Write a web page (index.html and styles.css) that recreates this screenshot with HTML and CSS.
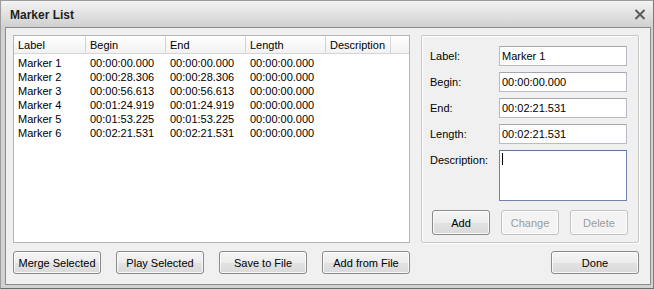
FILE: index.html
```html
<!DOCTYPE html>
<html lang="en">
<head>
    <meta charset="UTF-8">
    <title>Marker List</title>
    <link rel="stylesheet" href="styles.css">
</head>
<body>
    <div class="window">
        <!-- Title bar -->
        <div class="titlebar">
            <span class="title">Marker List</span>
            <svg class="close" width="12" height="11" viewBox="0 0 12 11">
                <path d="M1.5 1 L10.5 10 M10.5 1 L1.5 10" stroke="#5a5a5a" stroke-width="2" fill="none"/>
            </svg>
        </div>

        <div class="client">
            <!-- Left side: marker list and list actions -->
            <div class="left-col">
                <div class="listview">
                    <div class="list-header">
                        <div class="col col-label">Label</div>
                        <div class="col col-time">Begin</div>
                        <div class="col col-time">End</div>
                        <div class="col col-time">Length</div>
                        <div class="col col-desc">Description</div>
                        <div class="col col-fill"></div>
                    </div>
                    <div class="list-body">
                        <div class="row"><div class="cell col-label">Marker 1</div><div class="cell col-time">00:00:00.000</div><div class="cell col-time">00:00:00.000</div><div class="cell col-time">00:00:00.000</div></div>
                        <div class="row"><div class="cell col-label">Marker 2</div><div class="cell col-time">00:00:28.306</div><div class="cell col-time">00:00:28.306</div><div class="cell col-time">00:00:00.000</div></div>
                        <div class="row"><div class="cell col-label">Marker 3</div><div class="cell col-time">00:00:56.613</div><div class="cell col-time">00:00:56.613</div><div class="cell col-time">00:00:00.000</div></div>
                        <div class="row"><div class="cell col-label">Marker 4</div><div class="cell col-time">00:01:24.919</div><div class="cell col-time">00:01:24.919</div><div class="cell col-time">00:00:00.000</div></div>
                        <div class="row"><div class="cell col-label">Marker 5</div><div class="cell col-time">00:01:53.225</div><div class="cell col-time">00:01:53.225</div><div class="cell col-time">00:00:00.000</div></div>
                        <div class="row"><div class="cell col-label">Marker 6</div><div class="cell col-time">00:02:21.531</div><div class="cell col-time">00:02:21.531</div><div class="cell col-time">00:00:00.000</div></div>
                    </div>
                </div>
                <div class="button-row">
                    <button class="btn">Merge Selected</button>
                    <button class="btn">Play Selected</button>
                    <button class="btn">Save to File</button>
                    <button class="btn">Add from File</button>
                </div>
            </div>

            <!-- Right side: marker editor -->
            <div class="right-col">
                <div class="groupbox">
                    <div class="field">
                        <label>Label:</label>
                        <input class="textbox" type="text" value="Marker 1">
                    </div>
                    <div class="field">
                        <label>Begin:</label>
                        <input class="textbox" type="text" value="00:00:00.000">
                    </div>
                    <div class="field">
                        <label>End:</label>
                        <input class="textbox" type="text" value="00:02:21.531">
                    </div>
                    <div class="field">
                        <label>Length:</label>
                        <input class="textbox" type="text" value="00:02:21.531">
                    </div>
                    <div class="field field-desc">
                        <label>Description:</label>
                        <div class="textarea"><span class="caret"></span></div>
                    </div>
                    <div class="group-buttons">
                        <button class="btn btn-small">Add</button>
                        <button class="btn btn-small" disabled>Change</button>
                        <button class="btn btn-small" disabled>Delete</button>
                    </div>
                </div>
                <div class="done-row">
                    <button class="btn">Done</button>
                </div>
            </div>
        </div>
    </div>
</body>
</html>
```

FILE: styles.css
```css
/* Page */
body {
    margin: 0;
    font-family: "Liberation Sans", Arial, sans-serif;
    font-size: 11px;
    color: #000;
}

/* Window frame */
.window {
    width: 654px;
    height: 289px;
    box-sizing: border-box;
    border: 1px solid #9c9c9c;
    border-right-color: #7c7c7c;
    border-bottom-color: #6c6c6c;
    background-color: #d2d2d2;
    display: flex;
    flex-direction: column;
}

.titlebar {
    height: 26px;
    flex-shrink: 0;
    display: flex;
    align-items: center;
    justify-content: space-between;
    padding: 1px 7px 0 9px;
    box-sizing: border-box;
    background: linear-gradient(#f3f3f3, #d0d0d0);
}

.title {
    font-size: 12px;
    font-weight: bold;
    color: #1e1e1e;
}

.close {
    display: block;
}

/* Client area */
.client {
    flex: 1;
    margin: 0 2px 3px 4px;
    border: 1px solid #8c8c8c;
    background-color: #f0f0f0;
    padding: 7px 11px 10px 7px;
    display: flex;
    gap: 11px;
}

.left-col {
    width: 397px;
    display: flex;
    flex-direction: column;
    gap: 8px;
}

.right-col {
    width: 218px;
    display: flex;
    flex-direction: column;
    gap: 8px;
}

/* List view */
.listview {
    height: 208px;
    box-sizing: border-box;
    border: 1px solid #b4b4b4;
    background-color: #fff;
}

.list-header {
    display: flex;
    height: 18px;
    box-sizing: border-box;
    border-bottom: 1px solid #d5d5d5;
    background: linear-gradient(#ffffff, #f2f2f2);
}

.col {
    box-sizing: border-box;
    border-right: 1px solid #d5d5d5;
    padding: 1px 0 0 4px;
    line-height: 16px;
    white-space: nowrap;
}

.col-label {
    width: 72px;
}

.col-time {
    width: 80px;
}

.col-desc {
    width: 65px;
}

.col-fill {
    flex: 1;
    border-right: none;
}

.list-body {
    padding-top: 2px;
}

.row {
    display: flex;
    height: 14px;
    line-height: 15px;
}

.cell {
    box-sizing: border-box;
    padding-left: 4px;
    white-space: nowrap;
}

/* Buttons */
.btn {
    width: 88px;
    height: 23px;
    padding: 0;
    font-family: inherit;
    font-size: 11px;
    color: #000;
    border: 1px solid #8a8a8a;
    border-radius: 3px;
    background: linear-gradient(#f5f5f5 0%, #ececec 50%, #e2e2e2 51%, #dadada 100%);
    box-shadow: inset 0 0 0 1px rgba(255, 255, 255, 0.8);
}

.btn:disabled {
    color: #9b9b9b;
    border-color: #c2c2c2;
    background: #f3f3f3;
}

.btn-small {
    width: 58px;
    height: 25px;
}

.button-row {
    display: flex;
    justify-content: space-between;
}

.done-row {
    display: flex;
    justify-content: flex-end;
}

/* Editor group */
.groupbox {
    height: 208px;
    box-sizing: border-box;
    border: 1px solid #c6c6c6;
    border-radius: 2px;
    box-shadow: inset 1px 1px 0 #fff, 1px 1px 0 #fff;
    padding: 10px 10px 7px 8px;
    display: flex;
    flex-direction: column;
    gap: 6px;
}

.field {
    display: flex;
    align-items: center;
}

.field label {
    width: 69px;
}

.textbox {
    width: 128px;
    height: 20px;
    box-sizing: border-box;
    margin: 0;
    padding: 0 2px;
    font-family: inherit;
    font-size: 11px;
    color: #000;
    border: 1px solid #b8bcc4;
    border-top-color: #a4a7ae;
    background-color: #fff;
    outline: none;
}

.field-desc {
    align-items: flex-start;
}

.field-desc label {
    padding-top: 3px;
    line-height: 14px;
}

.textarea {
    width: 128px;
    height: 51px;
    box-sizing: border-box;
    border: 1px solid #6f84ad;
    border-top-color: #5d73a0;
    background-color: #fff;
    padding: 2px 2px;
}

.caret {
    display: block;
    width: 1px;
    height: 12px;
    background-color: #000;
}

.group-buttons {
    margin-top: 3px;
    padding-left: 2px;
    display: flex;
    justify-content: space-between;
}
```
